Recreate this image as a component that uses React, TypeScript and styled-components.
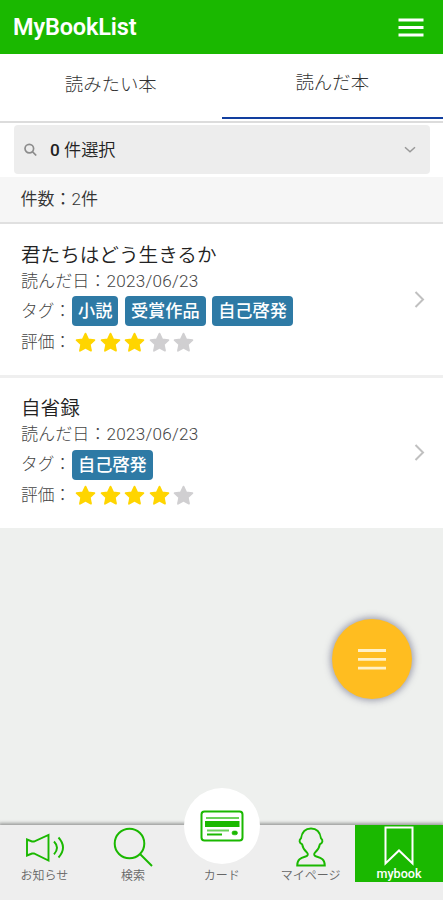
import React from "react";
import styled, { createGlobalStyle } from "styled-components";

const GREEN = "#1ab800";

const GlobalStyle = createGlobalStyle`
  * { box-sizing: border-box; }
  body {
    margin: 0;
    background: #eef0ee;
    font-family: Roboto, "Noto Sans CJK JP", sans-serif;
    color: #333;
  }
`;

const Screen = styled.div`
  display: flex;
  flex-direction: column;
  width: 443px;
  height: 900px;
  overflow: hidden;
  background: #eef0ee;
  white-space: nowrap;
`;

const Header = styled.header`
  display: flex;
  flex: none;
  align-items: center;
  justify-content: space-between;
  height: 54px;
  padding: 0 19px 0 13px;
  background: ${GREEN};
`;

const Brand = styled.h1`
  margin: 0;
  color: #fff;
  font-size: 23.5px;
  font-weight: 600;
  line-height: 55px;
  letter-spacing: -0.15px;
`;

const MenuIcon = styled.svg`
  display: block;
  width: 26px;
  height: 20px;
`;

const Tabs = styled.nav`
  display: flex;
  flex: none;
  height: 69px;
  background: #fff;
  border-bottom: 2px solid #dcdcdc;
`;

const Tab = styled.div<{ $active?: boolean }>`
  flex: 1;
  height: 65px;
  border-bottom: ${(p) => (p.$active ? "2px solid #123f9f" : "0")};
  line-height: ${(p) => (p.$active ? 58 : 62)}px;
  text-align: center;
  font-size: 18.4px;
  font-weight: 300;
  color: #333;
`;

const Filter = styled.div`
  flex: none;
  height: 54px;
  padding: 2px 13px 0 14px;
  background: #fff;
`;

const Select = styled.div`
  display: flex;
  align-items: center;
  height: 49px;
  padding: 0 14px 0 9px;
  border-radius: 4px;
  background: #ededed;
  font-size: 17.2px;
  font-weight: 350;
  color: #222;
`;

const SelectLabel = styled.span`
  flex: 1;
  padding-left: 13px;
  line-height: 48px;
`;

const SelectCount = styled.span`
  font-weight: 500;
`;

const Count = styled.div`
  flex: none;
  height: 47px;
  padding-left: 20.5px;
  background: #f6f6f6;
  border-bottom: 2px solid #e0e0e0;
  font-size: 17px;
  font-weight: 350;
  line-height: 45px;
`;

const BookRow = styled.article<{ $divided?: boolean }>`
  display: flex;
  flex: none;
  align-items: center;
  justify-content: space-between;
  height: ${(p) => (p.$divided ? 154 : 150)}px;
  padding: 0 18px 0 21px;
  background: #fff;
  border-bottom: ${(p) => (p.$divided ? "3px solid #efefef" : "0")};
`;

const BookBody = styled.div`
  display: flex;
  flex-direction: column;
  height: 118px;
`;

const BookTitle = styled.h2`
  margin: 0;
  height: 27px;
  font-size: 19.6px;
  font-weight: 350;
  line-height: 30px;
  color: #222;
`;

const Line = styled.div<{ $h: number }>`
  display: flex;
  align-items: center;
  height: ${(p) => p.$h}px;
  font-size: 17.1px;
  font-weight: 300;
  line-height: ${(p) => p.$h}px;
  color: #444;
`;

const FieldName = styled.span<{ $w: number }>`
  width: ${(p) => p.$w}px;
  font-size: 16.7px;
`;

const DateValue = styled.span`
  letter-spacing: 0.25px;
`;

const Tag = styled.span`
  height: 30px;
  margin-right: 6.5px;
  padding: 0 6px;
  border-radius: 4px;
  background: #2e7aa5;
  color: #fff;
  font-size: 17.2px;
  font-weight: 500;
  line-height: 30px;
`;

const Star = styled.svg`
  display: block;
  width: 21px;
  height: 21px;
  margin-right: 3.6px;
`;

const Fill = styled.div`
  flex: 1;
  display: flex;
  justify-content: flex-end;
  padding: 91px 31px 0 0;
`;

const ActionButton = styled.button`
  display: flex;
  align-items: center;
  justify-content: center;
  width: 80px;
  height: 80px;
  padding: 0;
  border: 0;
  border-radius: 50%;
  background: #ffbd20;
  box-shadow: 0 0 6px 2px rgba(90, 90, 120, 0.5);
`;

const BottomNav = styled.nav`
  display: flex;
  flex: none;
  height: 75px;
  background: #eee;
  box-shadow: 0 -1px 3px 1px rgba(80, 80, 80, 0.5);
`;

const NavItem = styled.div<{ $active?: boolean }>`
  display: flex;
  flex: ${(p) => (p.$active ? "0 0 88px" : "1")};
  flex-direction: column;
  align-items: center;
  height: 57px;
  background: ${(p) => (p.$active ? GREEN : "transparent")};
  color: ${(p) => (p.$active ? "#fff" : "#666")};
`;

const NavIcon = styled.svg`
  display: block;
  flex: none;
  width: 44px;
  height: 42px;
`;

const NavLabel = styled.span<{ $bold?: boolean }>`
  height: 14px;
  font-size: ${(p) => (p.$bold ? 12.6 : 12)}px;
  font-weight: ${(p) => (p.$bold ? 500 : 350)};
  line-height: ${(p) => (p.$bold ? 13 : 18)}px;
`;

const CardDisc = styled.div`
  display: flex;
  flex: none;
  align-items: center;
  justify-content: center;
  width: 76px;
  height: 76px;
  margin: -37px 0 3px;
  border-radius: 50%;
  background: #fff;
`;

const Chevron = () => (
  <svg width="12" height="20" viewBox="0 0 12 20">
    <path d="M2.5 2L10 9.5 2.5 17" fill="none" stroke="#c0c0c0" strokeWidth="2" />
  </svg>
);

const books = [
  { title: "君たちはどう生きるか", date: "2023/06/23", tags: ["小説", "受賞作品", "自己啓発"], rating: 3 },
  { title: "自省録", date: "2023/06/23", tags: ["自己啓発"], rating: 4 },
];

export default function App() {
  return (
    <>
      <GlobalStyle />
      <Screen>
        <Header>
          <Brand>MyBookList</Brand>
          <MenuIcon viewBox="0 0 26 20">
            <path d="M0.5 3h25M0.5 10.5h25M0.5 18h25" stroke="#fff" strokeWidth="3.2" />
          </MenuIcon>
        </Header>
        <Tabs>
          <Tab>読みたい本</Tab>
          <Tab $active>読んだ本</Tab>
        </Tabs>
        <Filter>
          <Select>
            <svg width="14" height="14" viewBox="0 0 14 14" fill="none" stroke="#8c8c8c" strokeWidth="1.7">
              <circle cx="6.3" cy="5.6" r="4.3" />
              <path d="M9.4 8.7l3.8 3.8" />
            </svg>
            <SelectLabel>
              <SelectCount>0</SelectCount> 件選択
            </SelectLabel>
            <svg width="12" height="8" viewBox="0 0 12 8" fill="none" stroke="#999" strokeWidth="1.5">
              <path d="M1 1.2l5 4.5 5-4.5" />
            </svg>
          </Select>
        </Filter>
        <Count>件数：2件</Count>
        {books.map((book, index) => (
          <BookRow key={book.title} $divided={index < books.length - 1}>
            <BookBody>
              <BookTitle>{book.title}</BookTitle>
              <Line $h={27}>
                読んだ日：<DateValue>{book.date}</DateValue>
              </Line>
              <Line $h={33}>
                <FieldName $w={51}>タグ：</FieldName>
                {book.tags.map((tag) => (
                  <Tag key={tag}>{tag}</Tag>
                ))}
              </Line>
              <Line $h={29}>
                <FieldName $w={54}>評価：</FieldName>
                {[1, 2, 3, 4, 5].map((n) => (
                  <Star key={n} viewBox="0 0 21 21">
                    <path
                      d="M10.5 1.6l2.7 5.7 6.2.8-4.6 4.3 1.2 6.3-5.5-3-5.5 3 1.2-6.3-4.6-4.3 6.2-.8z"
                      fill={n <= book.rating ? "#ffd500" : "#d0cfd1"}
                      stroke={n <= book.rating ? "#ffd500" : "#d0cfd1"}
                      strokeWidth="1.8"
                      strokeLinejoin="round"
                    />
                  </Star>
                ))}
              </Line>
            </BookBody>
            <Chevron />
          </BookRow>
        ))}
        <Fill>
          <ActionButton aria-label="menu">
            <svg width="30" height="24" viewBox="0 0 30 24">
              <path d="M1 3.5h28M1 12.3h28M1 21.1h28" stroke="#fff1c8" strokeWidth="2.8" />
            </svg>
          </ActionButton>
        </Fill>
        <BottomNav>
          <NavItem>
            <NavIcon viewBox="0 0 44 42" fill="none" stroke={GREEN} strokeWidth="1.9">
              <path d="M5 14.5v16l5-2h2l14.5 7V10L12 16.5h-2z" />
              <path d="M32 16.5q6 6.2 0 12.8M36.5 12.5q9 10 0 20" />
            </NavIcon>
            <NavLabel>お知らせ</NavLabel>
          </NavItem>
          <NavItem>
            <NavIcon viewBox="0 0 44 42" fill="none" stroke={GREEN} strokeWidth="2">
              <circle cx="18.5" cy="18.5" r="14.8" />
              <path d="M29 29l12 12" />
            </NavIcon>
            <NavLabel>検索</NavLabel>
          </NavItem>
          <NavItem>
            <CardDisc>
              <svg width="44" height="32" viewBox="0 0 44 32" fill="none" stroke={GREEN}>
                <rect x="1.5" y="1.5" width="41" height="29" rx="3" strokeWidth="2" />
                <path d="M6 8h33" strokeWidth="2" strokeOpacity=".65" />
                <path d="M5 14h34.5" strokeWidth="6" />
                <path d="M7 20.5h22" strokeWidth="2" strokeOpacity=".65" />
                <path d="M7 24.5h15" strokeWidth="2" />
                <rect x="32" y="21" width="5.5" height="3.8" rx="1.9" fill={GREEN} strokeOpacity=".6" />
              </svg>
            </CardDisc>
            <NavLabel>カード</NavLabel>
          </NavItem>
          <NavItem>
            <NavIcon viewBox="0 0 44 42" fill="none" stroke={GREEN} strokeWidth="1.9">
              <path d="M8.2 40.5c0-6.5 3.5-7.5 8.5-9 2.5-.8 2.8-2.5 1-4.2-3-2.8-4-4.5-4.5-8-3-1.5-3.5-4-1.2-6C13 6.5 16.5 3.5 22 3.5s9 3 10 9.8c2.3 2 1.8 4.5-1.2 6-.5 3.5-1.5 5.2-4.5 8-1.8 1.7-1.5 3.4 1 4.2 5 1.5 8.5 2.5 8.5 9z" />
            </NavIcon>
            <NavLabel>マイページ</NavLabel>
          </NavItem>
          <NavItem $active>
            <NavIcon viewBox="0 0 44 42" fill="none" stroke="#fff" strokeWidth="2">
              <path d="M8.5 2.5h27v36L22 25.5 8.5 38.5z" />
            </NavIcon>
            <NavLabel $bold>mybook</NavLabel>
          </NavItem>
        </BottomNav>
      </Screen>
    </>
  );
}
